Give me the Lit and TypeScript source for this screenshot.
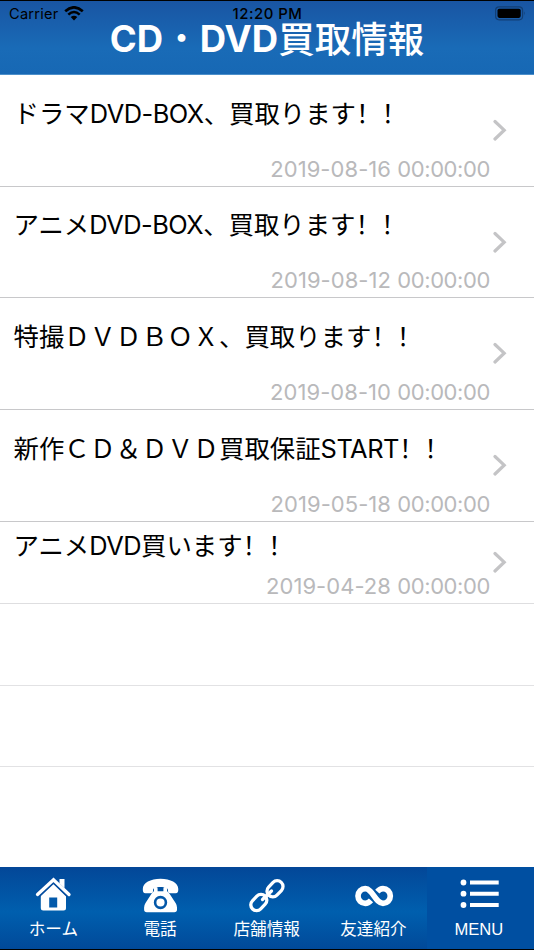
import { LitElement, html, css, svg } from "lit";
import { customElement } from "lit/decorators.js";

const items = [
  { title: "ドラマDVD-BOX、買取ります！！", date: "2019-08-16", time: "00:00:00" },
  { title: "アニメDVD-BOX、買取ります！！", date: "2019-08-12", time: "00:00:00" },
  { title: "特撮ＤＶＤＢＯＸ、買取ります！！", date: "2019-08-10", time: "00:00:00" },
  { title: "新作ＣＤ＆ＤＶＤ買取保証START！！", date: "2019-05-18", time: "00:00:00" },
  { title: "アニメDVD買います！！", date: "2019-04-28", time: "00:00:00", compact: true },
];

// Splits a title into runs of Latin, full-width Latin, bangs and Japanese text.
const runs = (title: string) =>
  (title.match(/[A-Z-]+|[Ａ-Ｚ＆]+|！+|[^A-ZＡ-Ｚ＆！-]+/g) ?? []).map((text) => ({
    text,
    kind: /^[A-Z]/.test(text) ? "latin" : /^[Ａ-Ｚ＆]/.test(text) ? "wide" : text[0] === "！" ? "bang" : "ja",
  }));

const home = svg`<path d="M5.8 18.5 18.3 6.6 31 18.5V31q0 2.5-2.5 2.5H8.3q-2.5 0-2.5-2.5Z"/>
  <path d="M2.5 18 18.5 3 34 18" fill="none" stroke="#044c9f" stroke-width="6"/>
  <path d="M24.5 2h5v9l-5-4.5Z"/>
  <path d="M2.5 17.5 18.5 2.8 34 17.5" fill="none" stroke="#fff" stroke-width="3.3" stroke-linecap="round"/>
  <path d="M14.2 20.5h8v10h-8Z" fill="#035aab"/>`;

const phone = svg`<path d="M.8 12C.8 6 8.500 1.800 18.500 1.800S36.300 6 36.300 12c0 3.200-.6 4.200-2.700 4.200h-5c-2 0-2.700-1-2.700-3.200 0-2-2.600-3-7.400-3s-7.400 1-7.400 3c0 2.200-.7 3.200-2.700 3.200h-5C1.400 16.200.8 15.200.8 12Z"/>
  <path d="M12 11.500q0-1.400 1.800-1.400t1.800 1.400v2.800h5.800v-2.800q0-1.400 1.800-1.400t1.800 1.400v2.800q1.300.3 2.200 2L33.600 26q1.400 2.200 1.400 4.500v2q0 2.700-2.700 2.700H4.800q-2.700 0-2.700-2.700v-2q0-2.300 1.400-4.500l6.300-9.700q.9-1.700 2.200-2Z"/>
  <circle cx="18.500" cy="25.500" r="5.400" fill="none" stroke="#0357a8" stroke-width="2.600"/>`;

const chain = svg`<g fill="none" stroke="#fff" stroke-width="3.300" stroke-linecap="round">
  <rect x="18" y="6" width="18" height="11.600" rx="5.800" transform="rotate(-46 27 11.800)"/>
  <rect x="1.800" y="19.700" width="18" height="11.600" rx="5.800" transform="rotate(-46 10.800 25.500)"/>
  <path d="m14.500 22.500 9-8.500"/></g>`;

const infinity = svg`<path d="M16 23.300C14 25.500 12.300 26.300 10.300 26.300a7.300 7.300 0 0 1 0-14.600C17.500 11.700 20.500 26.300 28 26.300a7.300 7.300 0 0 0 0-14.600C25.800 11.700 24.300 12.500 22.300 14.700" fill="none" stroke="#fff" stroke-width="5.700"/>`;

const menu = svg`<circle cx="3.500" cy="5.500" r="2.900"/><circle cx="3.500" cy="16.700" r="2.900"/><circle cx="3.500" cy="28" r="2.900"/>
  <path d="M10 3.600h28.700v3.900H10ZM10 14.800h28.700v3.900H10ZM10 26.100h28.700V30H10Z"/>`;

const tabs = [
  { label: "ホーム", icon: home },
  { label: "電話", icon: phone },
  { label: "店舗情報", icon: chain },
  { label: "友達紹介", icon: infinity },
  { label: "MENU", icon: menu, active: true },
];

@customElement("app-root")
export class AppRoot extends LitElement {
  static styles = css`
    :host {
      display: flex;
      flex-direction: column;
      height: 950px;
      overflow: hidden;
      background: #fff;
      color: #000;
      font-family: Inter, "Noto Sans CJK JP", sans-serif;
    }
    * { box-sizing: border-box; }
    header {
      height: 75px;
      flex: none;
      border-top: 1px solid #000;
      border-bottom: 1px solid #4c8fca;
      background: linear-gradient(#1955a3, #196bb7 65%, #1768b4);
    }
    .status {
      display: grid;
      grid-template-columns: 1fr auto 1fr;
      align-items: center;
      height: 18px;
      margin-top: 4px;
      padding: 0 8px 0 9px;
      font-size: 14.6px;
      line-height: 18px;
    }
    .carrier { display: flex; align-items: center; gap: 6px; letter-spacing: .25px; }
    .clock { font-weight: 500; font-size: 14.900px; letter-spacing: .5px; }
    .carrier svg, .battery { margin-top: -2px; }
    .carrier svg { margin-left: -1px; }
    .battery { justify-self: end; }
    .status svg { display: block; }
    h1 {
      margin: -4px 0 0;
      color: #fff;
      text-align: center;
      font-size: 36.500px;
      font-weight: 700;
      line-height: 40px;
      white-space: pre;
    }
    h1 .kanji { font-weight: 500; position: relative; top: 1px; }
    h1 .dot { font-weight: 400; }
    ul { margin: 0; padding: 0; list-style: none; flex: 1; }
    li {
      display: grid;
      grid-template-columns: 1fr 44px;
      height: 111.700px;
      border-bottom: 1px solid #c8c8ca;
    }
    li.compact { height: 82px; border-color: #dedee0; }
    li.blank { height: 81.800px; border-color: #e2e2e4; }
    .text { display: flex; flex-direction: column; padding: 18.500px 0 0 13.500px; }
    .compact .text { padding-top: 4px; }
    .title { font-size: 25.400px; line-height: 36px; white-space: nowrap; }
    .latin { letter-spacing: -.5px; }
    .wide { letter-spacing: .4px; }
    .bang { font-family: "Noto Sans CJK SC", sans-serif; }
    .date {
      align-self: flex-end;
      margin-top: 23.300px;
      color: #b9b9bb;
      font-size: 22px;
      line-height: 28px;
      letter-spacing: .05px;
      white-space: nowrap;
    }
    .clocktime { letter-spacing: -.4px; }
    .compact .date { margin-top: 8px; }
    .chevron { align-self: center; margin: -1px 0 0 3px; }
    nav {
      display: grid;
      grid-template-columns: repeat(4, 106.700px) 1fr;
      flex: none;
      height: 83px;
      background: linear-gradient(#034798, #005fae 55%, #014999);
      border-bottom: 1px solid #000;
      color: #fff;
    }
    .tab { display: flex; flex-direction: column; align-items: center; padding-top: 10px; }
    .tab.active { background: #004fa1; padding-right: 3px; }
    .tab svg { fill: #fff; overflow: visible; }
    .label { margin-top: 4px; font: 16.600px/24px "Liberation Sans", "Noto Sans CJK JP", sans-serif; white-space: nowrap; }
  `;

  render() {
    return html`
      <header>
        <div class="status">
          <div class="carrier">Carrier
            <svg width="20" height="15" viewBox="0 0 20 15">
              <path d="M1.200 5.300q8.800-8 17.600 0M4.300 8.600q5.700-5.200 11.400 0" fill="none" stroke="#000" stroke-width="2.600"/>
              <path d="M6.700 11.100q3.300-2.600 6.600 0L10 14.500Z"/>
            </svg>
          </div>
          <div class="clock">12:20 PM</div>
          <svg class="battery" width="31" height="15" viewBox="0 0 31 15">
            <rect x=".6" y=".8" width="27" height="13" rx="3.500" fill="none" stroke="#123f76" stroke-width="1.200"/>
            <rect x="2.500" y="2.700" width="23.200" height="9.200" rx="1.800"/>
            <path d="M29.200 5.200q1.800 2.100 0 4.200Z" fill="#123f76"/>
          </svg>
        </div>
        <h1>CD<span class="dot">・</span>DVD<span class="kanji">買取情報</span></h1>
      </header>
      <ul>
        ${items.map((item) => html`
          <li class=${item.compact ? "compact" : ""}>
            <div class="text">
              <span class="title">${runs(item.title).map((run) => html`<span class=${run.kind}>${run.text}</span>`)}</span>
              <time class="date">${item.date} <span class="clocktime">${item.time}</span></time>
            </div>
            <svg class="chevron" width="14" height="24" viewBox="0 0 14 24">
              <path d="m2 3.500 9.200 8.700L2 21" fill="none" stroke="#c4c4c6" stroke-width="3.200" stroke-linecap="round"/>
            </svg>
          </li>`)}
        <li class="blank"></li>
        <li class="blank"></li>
      </ul>
      <nav>
        ${tabs.map((tab) => html`
          <div class="tab ${tab.active ? "active" : ""}">
            <svg width="37" height="37" viewBox="0 0 37 37">${tab.icon}</svg>
            <span class="label">${tab.label}</span>
          </div>`)}
      </nav>
    `;
  }
}
